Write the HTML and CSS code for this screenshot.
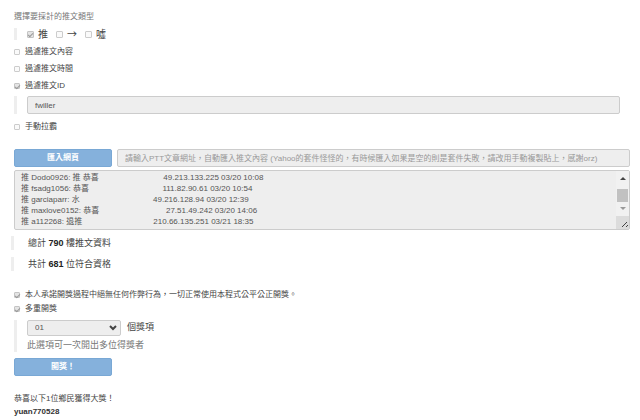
FILE: index.html
```html
<!DOCTYPE html>
<html lang="zh-Hant">
<head>
    <meta charset="UTF-8">
    <meta name="viewport" content="width=device-width, initial-scale=1.0">
    <title>推文抽獎</title>
    <link rel="stylesheet" href="styles.css">
</head>
<body>
    <form class="page">
        <div class="title">選擇要採計的推文類型</div>
        <div class="quote types">
            <label class="type"><input type="checkbox" checked disabled>推</label>
            <label class="type"><input type="checkbox" disabled>→</label>
            <label class="type"><input type="checkbox" disabled>噓</label>
        </div>

        <div class="filters">
            <label class="check"><input type="checkbox" disabled>過濾推文內容</label>
            <label class="check"><input type="checkbox" disabled>過濾推文時間</label>
            <label class="check"><input type="checkbox" checked disabled>過濾推文ID</label>
        </div>
        <div class="quote filter-id">
            <input type="text" class="field" value="fwiller" aria-label="過濾推文ID" disabled>
        </div>
        <label class="check"><input type="checkbox" disabled>手動拉霸</label>

        <div class="import">
            <button type="button" class="button" disabled>匯入網頁</button>
            <input type="text" class="field" aria-label="文章網址" placeholder="請輸入PTT文章網址，自動匯入推文內容 (Yahoo的套件怪怪的，有時候匯入如果是空的則是套件失敗，請改用手動複製貼上，感謝orz)" disabled>
        </div>
        <div class="pushes">
            <textarea class="push-list" aria-label="推文內容" disabled>
推 Dodo0926: 推 恭喜                             49.213.133.225 03/20 10:08
推 fsadg1056: 恭喜                                 111.82.90.61 03/20 10:54
推 garciaparr: 水                                 49.216.128.94 03/20 12:39
推 maxlove0152: 恭喜                              27.51.49.242 03/20 14:06
推 a112268: 退推                                210.66.135.251 03/21 18:35</textarea>
            <svg class="scrollbar" viewBox="0 0 13 58" aria-hidden="true">
                <rect width="13" height="45" fill="#f1f1f1"/>
                <path d="M4 9h6L7 6z" fill="#444"/>
                <rect x="1" y="18" width="11" height="13" fill="#c1c1c1"/>
                <path d="M4 36h6L7 39z" fill="#999"/>
                <rect y="45" width="13" height="13" fill="#dcdcdc"/>
                <path d="M6 56l5-5M10 56l2-2" stroke="#444" fill="none"/>
            </svg>
        </div>

        <div class="quote total">總計 <b>790</b> 樓推文資料</div>
        <div class="quote total">共計 <b>681</b> 位符合資格</div>

        <div class="options">
            <label class="check"><input type="checkbox" checked disabled>本人承諾開獎過程中絕無任何作弊行為，一切正常使用本程式公平公正開獎。</label>
            <label class="check"><input type="checkbox" checked disabled>多重開獎</label>
        </div>
        <div class="quote prizes">
            <div class="prize-row">
                <span class="select">
                    <select id="count" disabled><option>01</option></select>
                    <svg viewBox="0 0 8 6" aria-hidden="true"><path d="M1 1l3 3 3-3" fill="none" stroke="#444" stroke-width="2"/></svg>
                </span>
                <label for="count">個獎項</label>
            </div>
            <div class="hint">此選項可一次開出多位得獎者</div>
        </div>
        <button type="button" class="button" disabled>開獎！</button>

        <div class="result">
            <div>恭喜以下1位鄉民獲得大獎！</div>
            <b>yuan770528</b>
        </div>
    </form>
</body>
</html>
```
FILE: styles.css
```css
* {
    box-sizing: border-box;
}
body {
    margin: 0;
    background: #fff;
    color: #444;
    font-family: "Liberation Sans", "Noto Sans CJK TC", sans-serif;
    font-size: 8px;
    line-height: 12px;
}
.page {
    padding: 11px 10px 0 14px;
}
input, button, select, textarea {
    margin: 0;
    font: inherit;
    color: inherit;
    opacity: 1;
}
.title {
    color: #777;
}
.quote {
    border-left: 3px solid #eee;
    padding-left: 10px;
}
.types {
    display: flex;
    gap: 8px;
    margin: 5px 0 6px;
    font-family: "Noto Sans CJK TC", sans-serif;
    font-size: 10px;
}
.type, .check {
    display: flex;
    align-items: center;
    gap: 5px;
}
.type {
    gap: 4px;
}
input[type="checkbox"] {
    appearance: none;
    flex: none;
    display: grid;
    place-items: center;
    width: 6px;
    height: 6px;
    border: 1px solid #ccc;
    border-radius: 1px;
    background: #fafafa;
}
.type input[type="checkbox"] {
    width: 7px;
    height: 7px;
}
input[type="checkbox"]:checked {
    background: #e4e4e4;
    border-color: #c4c4c4;
}
input[type="checkbox"]:checked::after {
    content: "";
    width: 2px;
    height: 4px;
    border: solid #999;
    border-width: 0 1px 1px 0;
    transform: rotate(45deg);
}
.filters {
    display: grid;
    gap: 5px;
}
.field {
    width: 100%;
    height: 18px;
    padding: 0 7px;
    border: 1px solid #ccc;
    border-radius: 2px;
    background: #eee;
    color: #555;
}
.field::placeholder {
    color: #999;
}
.filter-id {
    margin: 4px 10px 7px 0;
    display: flex;
}
.import {
    display: flex;
    gap: 5px;
    margin: 16px 0 3px;
}
.button {
    flex: none;
    width: 98px;
    height: 18px;
    padding: 0;
    border: 1px solid #79a8d5;
    border-radius: 2px;
    background: #85b1dc;
    color: #fff;
    font-weight: bold;
}
.pushes {
    position: relative;
    display: flex;
}
.push-list {
    flex: 1;
    height: 60px;
    padding: 1px 6px;
    border: 1px solid #ccc;
    border-radius: 2px;
    background: #eee;
    color: #555;
    line-height: 11px;
    white-space: pre;
    overflow: hidden;
    resize: none;
}
.scrollbar {
    position: absolute;
    top: 1px;
    right: 1px;
    width: 13px;
    height: 58px;
}
.total {
    margin: 6px 0 7px -3px;
    padding-left: 14px;
    font-size: 9px;
    line-height: 14px;
}
.total b {
    color: #222;
}
.options {
    display: grid;
    gap: 2px;
    margin: 18px 0 5px;
}
.prizes {
    margin-bottom: 6px;
    font-size: 9px;
}
.prize-row {
    display: flex;
    gap: 6px;
    line-height: 14px;
}
.select {
    position: relative;
    display: flex;
    width: 94px;
}
.select select {
    appearance: none;
    width: 100%;
    height: 16px;
    padding: 0 7px;
    border: 1px solid #ccc;
    border-radius: 2px;
    background: #eee;
    color: #555;
    font-size: 8px;
}
.select svg {
    position: absolute;
    top: 5px;
    right: 4px;
    width: 8px;
    height: 6px;
}
.hint {
    margin-top: 2px;
    line-height: 14px;
    color: #777;
}
.result {
    margin-top: 16px;
    line-height: 13px;
}
.result b {
    color: #333;
}
```
